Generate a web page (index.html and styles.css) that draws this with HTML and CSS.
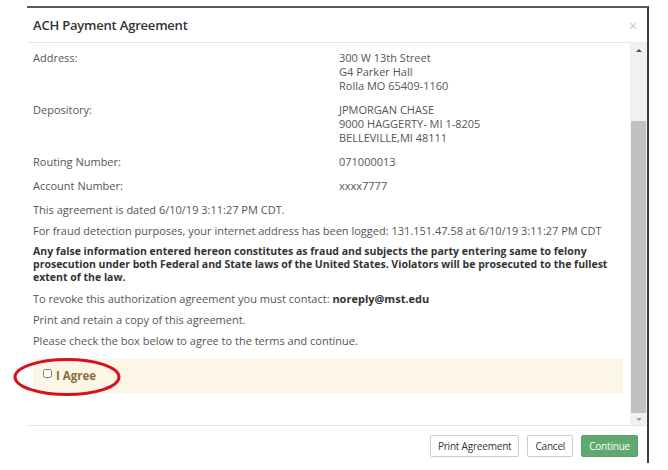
FILE: index.html
```html
<!DOCTYPE html>
<html lang="en">
<head>
  <meta charset="UTF-8" />
  <title>ACH Payment Agreement</title>
  <link rel="stylesheet" href="styles.css">
</head>
<body>

  <div class="modal">
    <div class="modal-header">
      <h4>ACH Payment Agreement</h4>
      <span class="close">&times;</span>
    </div>

    <div class="modal-body">
      <div class="content">
        <div class="row">
          <div class="label">Address:</div>
          <div class="value">300 W 13th Street<br>G4 Parker Hall<br>Rolla MO 65409-1160</div>
        </div>
        <div class="row">
          <div class="label">Depository:</div>
          <div class="value">JPMORGAN CHASE<br>9000 HAGGERTY- MI 1-8205<br>BELLEVILLE,MI 48111</div>
        </div>
        <div class="row">
          <div class="label">Routing Number:</div>
          <div class="value">071000013</div>
        </div>
        <div class="row">
          <div class="label">Account Number:</div>
          <div class="value">xxxx7777</div>
        </div>

        <p>This agreement is dated 6/10/19 3:11:27 PM CDT.</p>
        <p>For fraud detection purposes, your internet address has been logged: 131.151.47.58 at 6/10/19 3:11:27 PM CDT</p>
        <p class="warning">Any false information entered hereon constitutes as fraud and subjects the party entering same to felony prosecution under both Federal and State laws of the United States. Violators will be prosecuted to the fullest extent of the law.</p>
        <p>To revoke this authorization agreement you must contact: <b>noreply@mst.edu</b></p>
        <p>Print and retain a copy of this agreement.</p>
        <p>Please check the box below to agree to the terms and continue.</p>

        <div class="agree">
          <label><input type="checkbox"> I Agree</label>
          <svg class="circle" width="112" height="40" viewBox="0 0 112 40">
            <ellipse cx="55" cy="20" rx="52" ry="17.5" fill="none" stroke="#d7121c" stroke-width="3"/>
          </svg>
        </div>
      </div>

      <div class="scrollbar">
        <span class="arrow up"></span>
        <div class="track"><div class="thumb"></div></div>
        <span class="arrow down"></span>
      </div>
    </div>

    <div class="modal-footer">
      <button class="btn">Print Agreement</button>
      <button class="btn">Cancel</button>
      <button class="btn btn-success">Continue</button>
    </div>
  </div>

</body>
</html>
```

FILE: styles.css
```css
body {
  margin: 0;
  background: #fff;
  font-family: "Open Sans", "Liberation Sans", sans-serif;
  font-size: 11px;
  color: #555;
}

.modal {
  margin: 6px 0 0 27px;
  width: 620px;
  height: 455px;
  border-top: 2px solid #5a5a5a;
  border-right: 2px solid #3d3d3d;
  display: flex;
  flex-direction: column;
}

.modal-header {
  height: 34px;
  display: flex;
  align-items: center;
  justify-content: space-between;
  padding: 0 10px 0 6px;
  border-bottom: 1px solid #e8e8e8;
}

.modal-header h4 {
  margin: 0;
  font-size: 13px;
  letter-spacing: -0.2px;
  font-weight: 600;
  color: #333;
}

.close {
  font-size: 14px;
  color: #c8c8c8;
}

.modal-body {
  height: 382px;
  display: flex;
}

.content {
  flex: 1;
  padding: 8px 7px 0 6px;
  line-height: 14px;
}

.row {
  display: flex;
  margin-bottom: 10px;
}

.label {
  width: 306px;
}

p {
  margin: 0 0 8px;
  line-height: 13px;
}

.warning {
  font-weight: bold;
  font-size: 10.5px;
  color: #333;
}

p b {
  color: #333;
}

.agree {
  position: relative;
  background: #fcf6e6;
  height: 34px;
  margin-top: 12px;
  display: flex;
  align-items: center;
  padding-left: 10px;
}

.agree label {
  font-weight: bold;
  font-size: 11.5px;
  color: #8a6d3b;
  display: flex;
  align-items: center;
  gap: 4px;
}

.agree input {
  margin: 0;
  width: 9px;
  height: 9px;
  position: relative;
  top: -3px;
}

.circle {
  position: absolute;
  left: -21px;
  top: -2px;
}

.scrollbar {
  width: 17px;
  background: #f1f1f1;
  display: flex;
  flex-direction: column;
  align-items: center;
}

.arrow {
  width: 0;
  height: 0;
  border-left: 3px solid transparent;
  border-right: 3px solid transparent;
  margin: 6px 0;
}

.arrow.up {
  border-bottom: 3px solid #505050;
}

.arrow.down {
  border-top: 3px solid #a3a3a3;
  margin: 5px 0 4px;
}

.track {
  flex: 1;
  width: 100%;
  display: flex;
  flex-direction: column;
  justify-content: flex-end;
}

.thumb {
  height: 292px;
  margin: 0 1px;
  background: #c1c1c1;
}

.modal-footer {
  flex: 1;
  border-top: 1px solid #e5e5e5;
  display: flex;
  justify-content: flex-end;
  align-items: flex-start;
  gap: 8px;
  padding: 9px 9px 0 0;
}

.btn {
  font-family: "Open Sans", "Liberation Sans", sans-serif;
  font-size: 10px;
  letter-spacing: -0.2px;
  color: #333;
  background: #fff;
  border: 1px solid #ccc;
  border-radius: 2px;
  height: 22px;
  padding: 0 7px;
}

.btn-success {
  background: #5fa96e;
  border-color: #58a066;
  color: #fff;
}
```
